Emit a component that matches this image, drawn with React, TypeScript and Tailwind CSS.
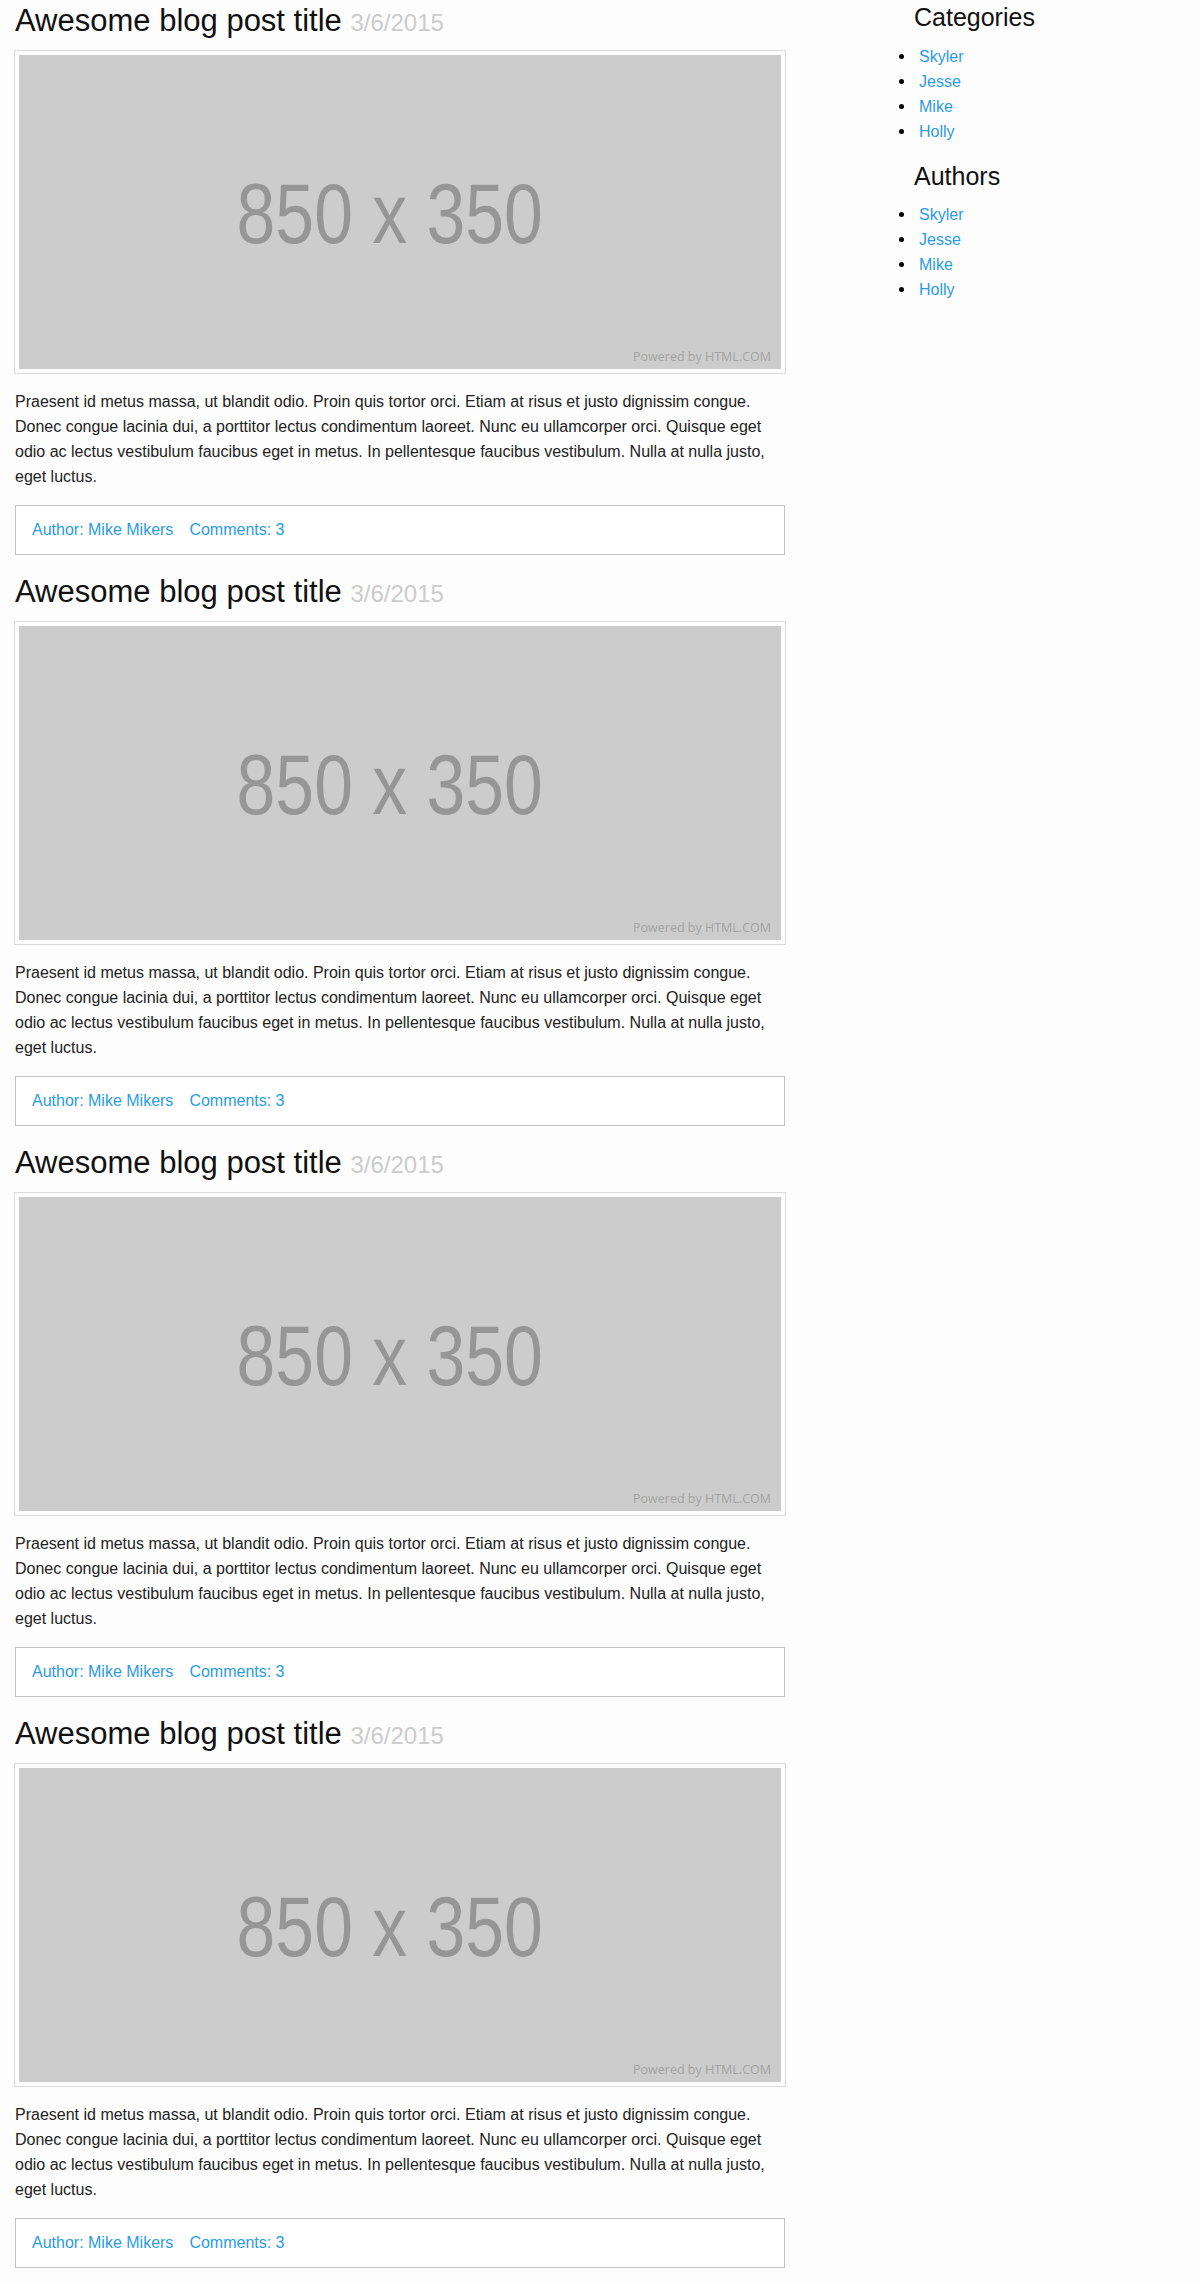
const posts = [1, 2, 3, 4];
const names = ["Skyler", "Jesse", "Mike", "Holly"];

const body =
  "Praesent id metus massa, ut blandit odio. Proin quis tortor orci. Etiam at risus et justo dignissim congue. Donec congue lacinia dui, a porttitor lectus condimentum laoreet. Nunc eu ullamcorper orci. Quisque eget odio ac lectus vestibulum faucibus eget in metus. In pellentesque faucibus vestibulum. Nulla at nulla justo, eget luctus.";

function Placeholder() {
  return (
    <div className="relative flex h-[314px] w-[762px] items-center justify-center bg-[#cccccc] pt-[3px] pr-[21px]">
      <span className="inline-block scale-x-[0.82] text-[85px] leading-none text-[#969696]">
        850 x 350
      </span>
      <span className="absolute bottom-[6px] right-[10px] font-['Open_Sans',sans-serif] text-[12.5px] leading-none text-[#a3a3a3]">
        Powered by HTML.COM
      </span>
    </div>
  );
}

function Post() {
  return (
    <article className="flex flex-col">
      <h1 className="mt-[3px] h-[36px] text-[31px] leading-[36px] text-[#111]">
        Awesome blog post title{" "}
        <span className="text-[24px] leading-none text-[#cccccc]">3/6/2015</span>
      </h1>

      <div className="-ml-px mt-[11px] w-[772px] border border-[#d9d9d9] p-[4px]">
        <Placeholder />
      </div>

      <p className="mt-[15px] text-[16px] leading-[25px] text-[#222]">{body}</p>

      <div className="mt-[16px] flex h-[50px] items-center border border-[#c2c2c2] bg-white px-[16px] text-[16px] text-[#2b9be6]">
        <a href="#">Author: Mike Mikers</a>
        <a href="#" className="ml-[16px]">
          Comments: 3
        </a>
      </div>
    </article>
  );
}

function SideList({ title, first }: { title: string; first?: boolean }) {
  return (
    <div className={first ? "mt-[2px]" : "mt-[17px]"}>
      <h3 className="pl-[15px] text-[25px] leading-[30px] text-[#111]">{title}</h3>
      <ul className={first ? "mt-[12px]" : "mt-[11px]"}>
        {names.map((n) => (
          <li key={n} className="flex items-center text-[16px] leading-[25px]">
            <span className="h-[5px] w-[5px] rounded-full bg-black" />
            <a href="#" className="ml-[15px] text-[#2b9be6]">
              {n}
            </a>
          </li>
        ))}
      </ul>
    </div>
  );
}

export default function App() {
  return (
    <div className="min-h-screen bg-[#fdfdfd] font-['Liberation_Sans',Arial,sans-serif]">
      <div className="flex items-start pb-[15px]">
        {/* Posts */}
        <main className="ml-[15px] flex w-[770px] flex-col gap-[16px]">
          {posts.map((p) => (
            <Post key={p} />
          ))}
        </main>

        {/* Sidebar */}
        <aside className="ml-[114px] w-[200px]">
          <SideList title="Categories" first />
          <SideList title="Authors" />
        </aside>
      </div>
    </div>
  );
}
